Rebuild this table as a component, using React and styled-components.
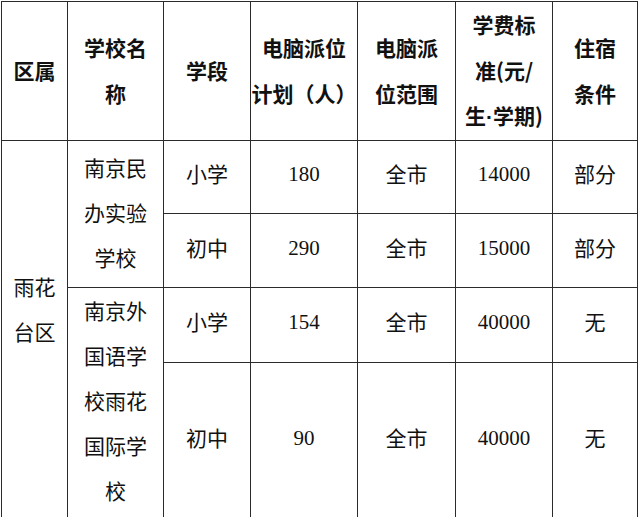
import styled, { createGlobalStyle } from "styled-components";

const GlobalStyle = createGlobalStyle`
  html, body {
    margin: 0;
    padding: 0;
    background: #fff;
  }
  body {
    font-family: "Noto Sans CJK SC", "Noto Sans", sans-serif;
    color: #111;
  }
`;

const Table = styled.table`
  border-collapse: collapse;
  table-layout: fixed;
  width: 637px;
  margin: 1px 0 0 1px;
`;

const Head = styled.th`
  border: 1px solid #2b2b2b;
  font-family: "Noto Sans CJK SC", sans-serif;
  font-weight: 700;
  font-size: 21px;
  line-height: 45.5px;
  text-align: center;
  vertical-align: middle;
  padding: 0;
  height: 137px;
`;

const Cell = styled.td`
  border: 1px solid #2b2b2b;
  font-family: "Noto Sans CJK SC", sans-serif;
  font-size: 21px;
  font-weight: 400;
  line-height: 45px;
  text-align: center;
  vertical-align: middle;
  padding: 0 0 ${(p) => p.$lift ?? 6}px 0;
  height: ${(p) => p.$h || 0}px;
`;

const Num = styled.span`
  font-family: "Liberation Serif", "Times New Roman", "DejaVu Serif", serif;
  font-size: 21px;
`;

const Dot = styled.span`
  font-family: "Liberation Sans", sans-serif;
  font-weight: 700;
`;

const widths = [66, 96, 87, 107, 98, 97, 85];

const headers = [
  ["区属"],
  ["学校名", "称"],
  ["学段"],
  ["电脑派位", "计划（人）"],
  ["电脑派", "位范围"],
  ["学费标", "准(元/", <>生<Dot>·</Dot>学期)</>],
  ["住宿", "条件"],
];

const Lines = ({ lines }) =>
  lines.map((l, i) => (
    <span key={i}>
      {i > 0 && <br />}
      {l}
    </span>
  ));

const rows = [
  { stage: "小学", plan: "180", fee: "14000", dorm: "部分", h: 66 },
  { stage: "初中", plan: "290", fee: "15000", dorm: "部分", h: 67 },
  { stage: "小学", plan: "154", fee: "40000", dorm: "无", h: 68 },
  { stage: "初中", plan: "90", fee: "40000", dorm: "无", h: 147 },
];

const schools = {
  0: ["南京民", "办实验", "学校"],
  2: ["南京外", "国语学", "校雨花", "国际学", "校"],
};

export default function App() {
  return (
    <>
      <GlobalStyle />
      <Table>
        <colgroup>
          {widths.map((w, i) => (
            <col key={i} style={{ width: w }} />
          ))}
        </colgroup>
        <thead>
          <tr>
            {headers.map((h, i) => (
              <Head key={i}>
                <Lines lines={h} />
              </Head>
            ))}
          </tr>
        </thead>
        <tbody>
          {rows.map((r, i) => (
            <tr key={i}>
              {i === 0 && (
                <Cell rowSpan={4} $lift={40}>
                  <Lines lines={["雨花", "台区"]} />
                </Cell>
              )}
              {schools[i] && (
                <Cell rowSpan={2} $lift={i === 0 ? 2 : 5}>
                  <Lines lines={schools[i]} />
                </Cell>
              )}
              <Cell $h={r.h}>{r.stage}</Cell>
              <Cell>
                <Num>{r.plan}</Num>
              </Cell>
              <Cell>全市</Cell>
              <Cell>
                <Num>{r.fee}</Num>
              </Cell>
              <Cell>{r.dorm}</Cell>
            </tr>
          ))}
        </tbody>
      </Table>
    </>
  );
}
